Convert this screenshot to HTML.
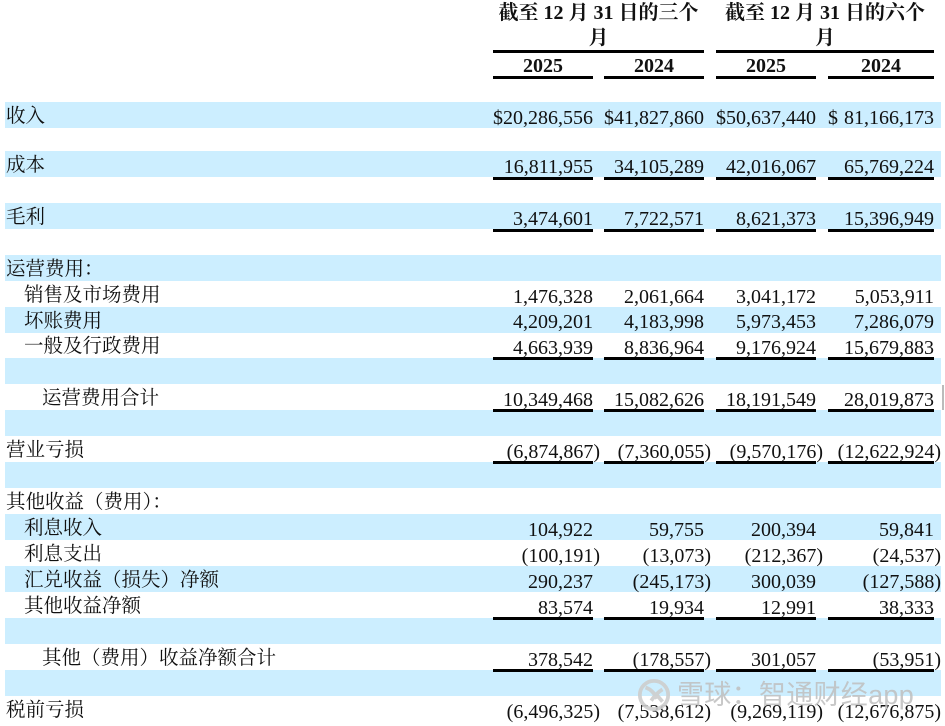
<!DOCTYPE html>
<html lang="zh">
<head>
<meta charset="utf-8">
<style>
html,body{margin:0;padding:0;background:#fff;}
#p{position:relative;width:945px;height:726px;overflow:hidden;background:#fff;font-family:"Liberation Serif","Noto Serif CJK SC",serif;color:#111;}
.b{position:absolute;left:5px;width:936px;height:26px;background:#cceeff;}
.l{position:absolute;height:3px;background:#000;}
.t{position:absolute;font-size:20px;line-height:24px;white-space:nowrap;margin-top:1px;}
.z{font-family:"Liberation Serif","Noto Serif CJK SC",serif;font-size:19.5px;margin-top:2px;}
.r{text-align:right;}
.h{font-weight:bold;text-align:center;}
.c1{left:473px;width:120px;}
.c2{left:584px;width:120px;}
.c3{left:696px;width:120px;}
.c4{left:814px;width:120px;}
.o{margin-right:-7px;}
#w{position:absolute;left:677px;top:676px;font-family:"Liberation Sans","Noto Sans CJK SC",sans-serif;font-size:27px;letter-spacing:.3px;line-height:38px;color:rgba(190,190,190,.85);white-space:nowrap;}
</style>
</head>
<body>
<div id="p">
<div class="b" style="top:102px"></div>
<div class="b" style="top:151px"></div>
<div class="b" style="top:203px"></div>
<div class="b" style="top:255px"></div>
<div class="b" style="top:307px"></div>
<div class="b" style="top:358px"></div>
<div class="b" style="top:410px"></div>
<div class="b" style="top:462px"></div>
<div class="b" style="top:514px"></div>
<div class="b" style="top:566px"></div>
<div class="b" style="top:618px"></div>
<div class="b" style="top:670px"></div>

<div class="t h" style="left:493px;width:211px;top:0;line-height:25px;">截至 12 月 31 日的三个<br>月</div>
<div class="t h" style="left:716px;width:218px;top:0;line-height:25px;">截至 12 月 31 日的六个<br>月</div>
<div class="l" style="left:493px;width:211px;top:50px"></div>
<div class="l" style="left:716px;width:218px;top:50px"></div>
<div class="t h" style="left:493px;width:100px;top:53px">2025</div>
<div class="t h" style="left:604px;width:100px;top:53px">2024</div>
<div class="t h" style="left:716px;width:100px;top:53px">2025</div>
<div class="t h" style="left:828px;width:106px;top:53px">2024</div>
<div class="l" style="left:493px;width:100px;top:76px"></div>
<div class="l" style="left:604px;width:100px;top:76px"></div>
<div class="l" style="left:716px;width:100px;top:76px"></div>
<div class="l" style="left:828px;width:106px;top:76px"></div>

<div class="t z" style="left:6px;top:103px">收入</div>
<div class="t" style="left:493px;top:105px">$20,286,556</div>
<div class="t" style="left:604px;top:105px">$41,827,860</div>
<div class="t" style="left:716px;top:105px">$50,637,440</div>
<div class="t" style="left:828px;top:105px">$</div>
<div class="t r c4" style="top:105px">81,166,173</div>

<div class="t z" style="left:6px;top:152px">成本</div>
<div class="t r c1" style="top:154px">16,811,955</div>
<div class="t r c2" style="top:154px">34,105,289</div>
<div class="t r c3" style="top:154px">42,016,067</div>
<div class="t r c4" style="top:154px">65,769,224</div>
<div class="l" style="left:493px;width:100px;top:177px"></div>
<div class="l" style="left:604px;width:100px;top:177px"></div>
<div class="l" style="left:716px;width:100px;top:177px"></div>
<div class="l" style="left:828px;width:106px;top:177px"></div>

<div class="t z" style="left:6px;top:204px">毛利</div>
<div class="t r c1" style="top:206px">3,474,601</div>
<div class="t r c2" style="top:206px">7,722,571</div>
<div class="t r c3" style="top:206px">8,621,373</div>
<div class="t r c4" style="top:206px">15,396,949</div>
<div class="l" style="left:493px;width:100px;top:229px"></div>
<div class="l" style="left:604px;width:100px;top:229px"></div>
<div class="l" style="left:716px;width:100px;top:229px"></div>
<div class="l" style="left:828px;width:106px;top:229px"></div>

<div class="t z" style="left:6px;top:256px">运营费用：</div>

<div class="t z" style="left:24px;top:282px">销售及市场费用</div>
<div class="t r c1" style="top:284px">1,476,328</div>
<div class="t r c2" style="top:284px">2,061,664</div>
<div class="t r c3" style="top:284px">3,041,172</div>
<div class="t r c4" style="top:284px">5,053,911</div>

<div class="t z" style="left:24px;top:308px">坏账费用</div>
<div class="t r c1" style="top:309px">4,209,201</div>
<div class="t r c2" style="top:309px">4,183,998</div>
<div class="t r c3" style="top:309px">5,973,453</div>
<div class="t r c4" style="top:309px">7,286,079</div>

<div class="t z" style="left:24px;top:333px">一般及行政费用</div>
<div class="t r c1" style="top:335px">4,663,939</div>
<div class="t r c2" style="top:335px">8,836,964</div>
<div class="t r c3" style="top:335px">9,176,924</div>
<div class="t r c4" style="top:335px">15,679,883</div>
<div class="l" style="left:493px;width:100px;top:357px"></div>
<div class="l" style="left:604px;width:100px;top:357px"></div>
<div class="l" style="left:716px;width:100px;top:357px"></div>
<div class="l" style="left:828px;width:106px;top:357px"></div>

<div class="t z" style="left:42px;top:385px">运营费用合计</div>
<div class="t r c1" style="top:387px">10,349,468</div>
<div class="t r c2" style="top:387px">15,082,626</div>
<div class="t r c3" style="top:387px">18,191,549</div>
<div class="t r c4" style="top:387px">28,019,873</div>
<div class="l" style="left:493px;width:100px;top:409px"></div>
<div class="l" style="left:604px;width:100px;top:409px"></div>
<div class="l" style="left:716px;width:100px;top:409px"></div>
<div class="l" style="left:828px;width:106px;top:409px"></div>
<div style="position:absolute;left:942px;top:385px;width:2px;height:25px;background:#bbb"></div>

<div class="t z" style="left:6px;top:437px">营业亏损</div>
<div class="t r c1" style="top:439px"><span class="o">(6,874,867)</span></div>
<div class="t r c2" style="top:439px"><span class="o">(7,360,055)</span></div>
<div class="t r c3" style="top:439px"><span class="o">(9,570,176)</span></div>
<div class="t r c4" style="top:439px"><span class="o">(12,622,924)</span></div>
<div class="l" style="left:493px;width:100px;top:461px"></div>
<div class="l" style="left:604px;width:100px;top:461px"></div>
<div class="l" style="left:716px;width:100px;top:461px"></div>
<div class="l" style="left:828px;width:106px;top:461px"></div>

<div class="t z" style="left:6px;top:489px">其他收益（费用）：</div>

<div class="t z" style="left:24px;top:515px">利息收入</div>
<div class="t r c1" style="top:517px">104,922</div>
<div class="t r c2" style="top:517px">59,755</div>
<div class="t r c3" style="top:517px">200,394</div>
<div class="t r c4" style="top:517px">59,841</div>

<div class="t z" style="left:24px;top:541px">利息支出</div>
<div class="t r c1" style="top:543px"><span class="o">(100,191)</span></div>
<div class="t r c2" style="top:543px"><span class="o">(13,073)</span></div>
<div class="t r c3" style="top:543px"><span class="o">(212,367)</span></div>
<div class="t r c4" style="top:543px"><span class="o">(24,537)</span></div>

<div class="t z" style="left:24px;top:567px">汇兑收益（损失）净额</div>
<div class="t r c1" style="top:569px">290,237</div>
<div class="t r c2" style="top:569px"><span class="o">(245,173)</span></div>
<div class="t r c3" style="top:569px">300,039</div>
<div class="t r c4" style="top:569px"><span class="o">(127,588)</span></div>

<div class="t z" style="left:24px;top:593px">其他收益净额</div>
<div class="t r c1" style="top:595px">83,574</div>
<div class="t r c2" style="top:595px">19,934</div>
<div class="t r c3" style="top:595px">12,991</div>
<div class="t r c4" style="top:595px">38,333</div>
<div class="l" style="left:493px;width:100px;top:617px"></div>
<div class="l" style="left:604px;width:100px;top:617px"></div>
<div class="l" style="left:716px;width:100px;top:617px"></div>
<div class="l" style="left:828px;width:106px;top:617px"></div>

<div class="t z" style="left:42px;top:645px">其他（费用）收益净额合计</div>
<div class="t r c1" style="top:647px">378,542</div>
<div class="t r c2" style="top:647px"><span class="o">(178,557)</span></div>
<div class="t r c3" style="top:647px">301,057</div>
<div class="t r c4" style="top:647px"><span class="o">(53,951)</span></div>
<div class="l" style="left:493px;width:100px;top:669px"></div>
<div class="l" style="left:604px;width:100px;top:669px"></div>
<div class="l" style="left:716px;width:100px;top:669px"></div>
<div class="l" style="left:828px;width:106px;top:669px"></div>

<div class="t z" style="left:6px;top:697px">税前亏损</div>
<div class="t r c1" style="top:699px"><span class="o">(6,496,325)</span></div>
<div class="t r c2" style="top:699px"><span class="o">(7,538,612)</span></div>
<div class="t r c3" style="top:699px"><span class="o">(9,269,119)</span></div>
<div class="t r c4" style="top:699px"><span class="o">(12,676,875)</span></div>

<svg style="position:absolute;left:637px;top:678px" width="34" height="34" viewBox="0 0 36 36" fill="none" stroke="rgba(205,205,205,.9)" stroke-width="4">
<circle cx="18" cy="18" r="15"/>
<path d="M9 10c6 2 10 7 12 12M27 12c-5 3-8 6-12 12M20 17l7 8"/>
</svg>
<div id="w">雪球：智通财经app</div>
</div>
</body>
</html>
